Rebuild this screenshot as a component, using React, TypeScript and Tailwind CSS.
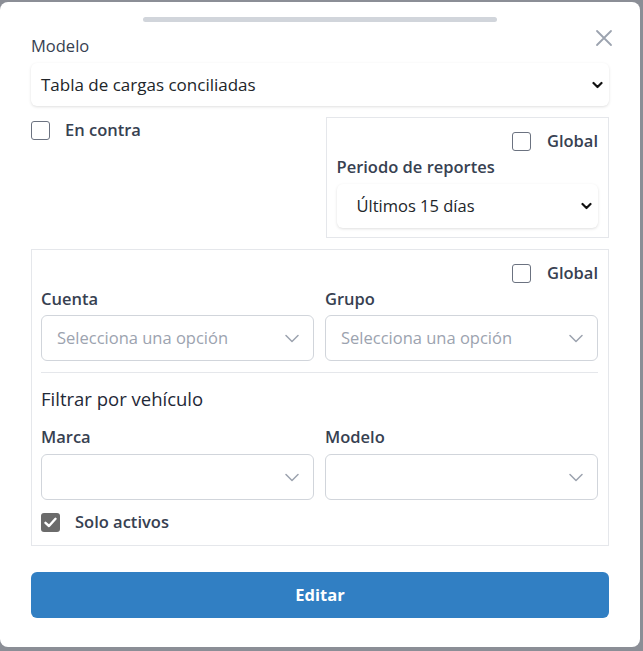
import React from "react";

const font = { fontFamily: '"Open Sans", "Noto Sans", sans-serif' };

function Chevron() {
  return (
    <svg width="11" height="8" viewBox="0 0 11 8" className="shrink-0">
      <polyline points="1.5,2 5.5,6 9.5,2" fill="none" stroke="#111" strokeWidth="2.2" strokeLinecap="round" strokeLinejoin="round" />
    </svg>
  );
}

function ThinChevron() {
  return (
    <svg width="14" height="9" viewBox="0 0 14 9" className="shrink-0">
      <polyline points="1,1.5 7,7.5 13,1.5" fill="none" stroke="#9ca3af" strokeWidth="1.5" strokeLinecap="round" strokeLinejoin="round" />
    </svg>
  );
}

function Box({ checked = false }: { checked?: boolean }) {
  if (checked) {
    return (
      <div className="w-[19px] h-[19px] rounded-[3px] bg-[#6b6b6b] flex items-center justify-center shrink-0">
        <svg width="13" height="11" viewBox="0 0 13 11">
          <polyline points="1.5,5.8 5,9 11.5,1.8" fill="none" stroke="#fff" strokeWidth="2.4" strokeLinecap="round" strokeLinejoin="round" />
        </svg>
      </div>
    );
  }
  return <div className="w-[19px] h-[19px] rounded-[3px] border-[1.5px] border-[#6b7280] bg-white shrink-0" />;
}

function FancySelect({ placeholder }: { placeholder?: string }) {
  return (
    <div className="h-[46px] rounded-md border border-[#d1d5db] bg-white flex items-center justify-between pl-[15px] pr-[14px] text-[16.5px] text-[#9ca3af]">
      <span>{placeholder ?? ""}</span>
      <ThinChevron />
    </div>
  );
}

function GlobalRow() {
  return (
    <div className="flex justify-end items-center gap-[16px] h-[24px]">
      <Box />
      <span className="text-[16.5px] font-semibold text-[#374151]">Global</span>
    </div>
  );
}

export default function App() {
  return (
    <div style={font} className="w-[643px] h-[651px] bg-[#8b8e96] pt-[2px] pr-[3px] pb-[4px]">
      <div className="relative bg-white rounded-lg h-full px-[31px] pt-[15px]">
        <div className="mx-auto w-[354px] h-[5px] rounded-full bg-[#d1d5db]" />
        <button className="absolute right-[27px] top-[27px] w-[18px] h-[18px] flex items-center justify-center">
          <svg width="18" height="18" viewBox="0 0 18 18">
            <path d="M2 2 L16 16 M16 2 L2 16" stroke="#9ca3af" strokeWidth="1.8" strokeLinecap="round" />
          </svg>
        </button>

        <div className="mt-[12px] text-[16.5px] leading-[24px] text-[#374151]">Modelo</div>
        <div className="mt-[5px] h-[43px] rounded-md bg-white shadow-[0_1px_3px_rgba(0,0,0,0.13)] flex items-center justify-between pl-[10px] pr-[6px] text-[17px] text-[#212529]">
          <span>Tabla de cargas conciliadas</span>
          <Chevron />
        </div>

        <div className="mt-[11px] grid grid-cols-2 gap-[11px] items-start">
          <div className="flex items-center gap-[15px] mt-[4px] h-[19px]">
            <Box />
            <span className="text-[16.5px] font-semibold text-[#374151]">En contra</span>
          </div>
          <div className="border border-[#e5e7eb] px-[10px] pt-[11px] pb-[9px]">
            <GlobalRow />
            <div className="mt-[2px] text-[16.5px] leading-[24px] font-semibold text-[#374151]">Periodo de reportes</div>
            <div className="mt-[5px] h-[44px] rounded-md bg-white shadow-[0_1px_3px_rgba(0,0,0,0.13)] flex items-center justify-between pl-[20px] pr-[6px] text-[16.5px] text-[#212529]">
              <span>Últimos 15 días</span>
              <Chevron />
            </div>
          </div>
        </div>

        <div className="mt-[11px] border border-[#e5e7eb] pl-[9px] pr-[10px] pt-[11px] pb-[10px]">
          <GlobalRow />
          <div className="mt-[2px] grid grid-cols-2 gap-[11px]">
            <div>
              <div className="text-[16.5px] leading-[24px] font-semibold text-[#374151]">Cuenta</div>
              <div className="mt-[4px]">
                <FancySelect placeholder="Selecciona una opción" />
              </div>
            </div>
            <div>
              <div className="text-[16.5px] leading-[24px] font-semibold text-[#374151]">Grupo</div>
              <div className="mt-[4px]">
                <FancySelect placeholder="Selecciona una opción" />
              </div>
            </div>
          </div>
          <div className="mt-[11px] h-px bg-[#e5e7eb]" />
          <div className="mt-[12px] text-[18.5px] leading-[28px] text-[#1f2937]">Filtrar por vehículo</div>
          <div className="mt-[12px] grid grid-cols-2 gap-[11px]">
            <div>
              <div className="text-[16.5px] leading-[24px] font-semibold text-[#374151]">Marca</div>
              <div className="mt-[5px]">
                <FancySelect />
              </div>
            </div>
            <div>
              <div className="text-[16.5px] leading-[24px] font-semibold text-[#374151]">Modelo</div>
              <div className="mt-[5px]">
                <FancySelect />
              </div>
            </div>
          </div>
          <div className="mt-[10px] flex items-center gap-[15px] h-[24px]">
            <Box checked />
            <span className="text-[16.5px] font-semibold text-[#374151]">Solo activos</span>
          </div>
          <div className="h-px" />
        </div>

        <button className="mt-[26px] w-full h-[46px] rounded-md bg-[#317fc3] text-white text-[16.5px] font-bold">
          Editar
        </button>
      </div>
    </div>
  );
}
